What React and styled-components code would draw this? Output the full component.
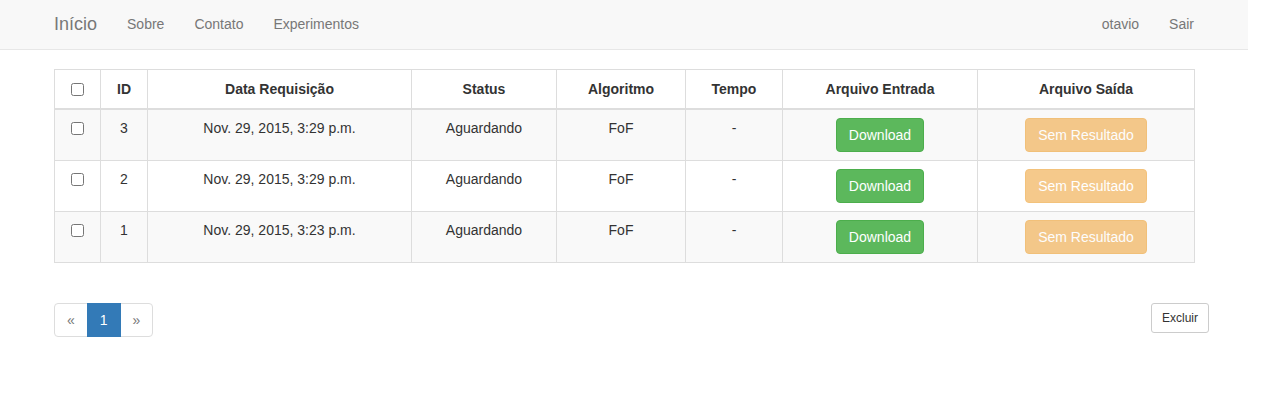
import React, { useState } from 'react'
import styled, { createGlobalStyle, css } from 'styled-components'

const GlobalStyle = createGlobalStyle`
  * { box-sizing: border-box; }
  html, body { margin: 0; padding: 0; background: #fff; }
  body {
    font-family: "Liberation Sans", Arial, Helvetica, sans-serif;
    font-size: 14px;
    line-height: 1.42857143;
    color: #333;
  }
`

const rows = [
  { id: 3, date: 'Nov. 29, 2015, 3:29 p.m.', status: 'Aguardando', algo: 'FoF', time: '-' },
  { id: 2, date: 'Nov. 29, 2015, 3:29 p.m.', status: 'Aguardando', algo: 'FoF', time: '-' },
  { id: 1, date: 'Nov. 29, 2015, 3:23 p.m.', status: 'Aguardando', algo: 'FoF', time: '-' }
]

const columns = [
  { label: '', width: 46 },
  { label: 'ID', width: 47 },
  { label: 'Data Requisição', width: 264 },
  { label: 'Status', width: 145 },
  { label: 'Algoritmo', width: 129 },
  { label: 'Tempo', width: 97 },
  { label: 'Arquivo Entrada', width: 195 },
  { label: 'Arquivo Saída', width: 217 }
]

export default function App () {
  const [checked, setChecked] = useState({})
  const toggle = id => setChecked(prev => ({ ...prev, [id]: !prev[id] }))

  return (
    <Page>
      <GlobalStyle />
      <Navbar>
        <Container>
          <NavInner>
            <NavLeft>
              <Brand href='#'>Início</Brand>
              <NavLink href='#'>Sobre</NavLink>
              <NavLink href='#'>Contato</NavLink>
              <NavLink href='#'>Experimentos</NavLink>
            </NavLeft>
            <NavRight>
              <NavLink href='#'>otavio</NavLink>
              <NavLink href='#'>Sair</NavLink>
            </NavRight>
          </NavInner>
        </Container>
      </Navbar>
      <Container>
        <Table>
          <colgroup>
            {columns.map((c, i) => <col key={i} style={{ width: c.width }} />)}
          </colgroup>
          <thead>
            <tr>
              {columns.map((c, i) => (
                <Th key={i}>
                  {i === 0 ? <Check type='checkbox' /> : c.label}
                </Th>
              ))}
            </tr>
          </thead>
          <tbody>
            {rows.map((r, i) => (
              <Tr key={r.id} striped={i % 2 === 0}>
                <Td><Check type='checkbox' checked={!!checked[r.id]} onChange={() => toggle(r.id)} /></Td>
                <Td>{r.id}</Td>
                <Td>{r.date}</Td>
                <Td>{r.status}</Td>
                <Td>{r.algo}</Td>
                <Td>{r.time}</Td>
                <Td><Btn variant='success'>Download</Btn></Td>
                <Td><Btn variant='warning' disabled>Sem Resultado</Btn></Td>
              </Tr>
            ))}
          </tbody>
        </Table>
        <Footer>
          <Pagination>
            <PageItem href='#' disabled>&laquo;</PageItem>
            <PageItem href='#' active>1</PageItem>
            <PageItem href='#' disabled>&raquo;</PageItem>
          </Pagination>
          <SmallBtn type='button'>Excluir</SmallBtn>
        </Footer>
      </Container>
    </Page>
  )
}

const Page = styled.div`
  width: 1248px;
  min-height: 419px;
`

const Navbar = styled.nav`
  height: 50px;
  background-color: #f8f8f8;
  border-bottom: 1px solid #e7e7e7;
  margin-bottom: 19px;
`

const Container = styled.div`
  width: 1170px;
  margin: 0 auto;
  padding: 0 15px;
`

const NavInner = styled.div`
  display: flex;
  justify-content: space-between;
  margin: 0 -15px;
`

const NavLeft = styled.div`
  display: flex;
  align-items: center;
`

const NavRight = styled.div`
  display: flex;
  align-items: center;
`

const Brand = styled.a`
  display: block;
  padding: 14px 15px 15px;
  font-size: 18px;
  line-height: 20px;
  color: #777;
  text-decoration: none;
`

const NavLink = styled.a`
  display: block;
  padding: 14px 15px 15px;
  line-height: 20px;
  color: #777;
  text-decoration: none;
`

const Table = styled.table`
  width: 1140px;
  border-collapse: collapse;
  border-spacing: 0;
  border: 1px solid #ddd;
  margin-bottom: 20px;
  table-layout: fixed;
`

const Th = styled.th`
  padding: 9px 8px;
  line-height: 20px;
  text-align: center;
  font-weight: bold;
  vertical-align: bottom;
  border: 1px solid #ddd;
  border-bottom: 2px solid #ddd;
`

const Tr = styled.tr`
  ${({ striped }) => striped && css`
    background-color: #f9f9f9;
  `}
`

const Td = styled.td`
  padding: 8px;
  line-height: 20px;
  text-align: center;
  vertical-align: top;
  border: 1px solid #ddd;
`

const Check = styled.input`
  margin: 4px 0 0;
  width: 13px;
  height: 13px;
  vertical-align: top;
`

const Btn = styled.button`
  display: inline-block;
  padding: 6px 12px;
  font-family: inherit;
  font-size: 14px;
  line-height: 20px;
  border-radius: 4px;
  border: 1px solid transparent;
  color: #fff;
  cursor: pointer;
  ${({ variant }) => variant === 'success' && css`
    background-color: #5cb85c;
    border-color: #4cae4c;
  `}
  ${({ variant }) => variant === 'warning' && css`
    background-color: #f0ad4e;
    border-color: #eea236;
  `}
  &:disabled {
    opacity: 0.65;
    cursor: not-allowed;
  }
`

const Footer = styled.div`
  display: flex;
  justify-content: space-between;
  align-items: flex-start;
  margin-right: -15px;
  padding-top: 20px;
`

const Pagination = styled.div`
  display: flex;
  margin: 0;
`

const PageItem = styled.a`
  display: block;
  padding: 6px 12px;
  line-height: 20px;
  min-width: 33px;
  text-align: center;
  text-decoration: none;
  color: #337ab7;
  background-color: #fff;
  border: 1px solid #ddd;
  margin-left: -1px;
  &:first-child {
    margin-left: 0;
    border-radius: 4px 0 0 4px;
  }
  &:last-child {
    border-radius: 0 4px 4px 0;
  }
  ${({ disabled }) => disabled && css`
    color: #777;
    cursor: not-allowed;
  `}
  ${({ active }) => active && css`
    color: #fff;
    background-color: #337ab7;
    border-color: #337ab7;
    position: relative;
    z-index: 2;
  `}
`

const SmallBtn = styled.button`
  padding: 5px 10px;
  font-family: inherit;
  font-size: 12px;
  line-height: 1.5;
  border-radius: 3px;
  color: #333;
  background-color: #fff;
  border: 1px solid #ccc;
  cursor: pointer;
`
